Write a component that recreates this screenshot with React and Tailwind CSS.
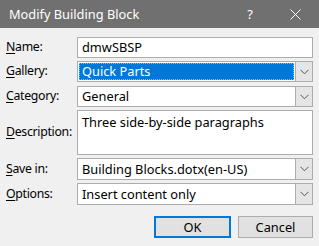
import React from "react";

const font = { fontFamily: '"Noto Sans", sans-serif' };

function Chevron() {
  return (
    <svg width="9" height="6" viewBox="0 0 9 6" className="block">
      <path d="M0.5 0.8 L4.5 4.8 L8.5 0.8" fill="none" stroke="#555" strokeWidth="1" />
    </svg>
  );
}

function Label({ u, rest }) {
  return (
    <span className="w-[71px] shrink-0 whitespace-nowrap text-[12.3px] tracking-[-0.3px] text-black">
      <span className="underline underline-offset-2">{u}</span>
      {rest}
    </span>
  );
}

function Select({ value, selected, tall }) {
  return (
    <div className={`flex flex-1 border border-[#adadad] bg-white ${tall ? "h-[22px]" : "h-[21px]"}`}>
      <div className="flex flex-1 items-center p-[1px]">
        {selected ? (
          <div className="flex h-full w-full items-center border border-dotted border-[#f0a060] bg-[#0078d7] pl-[2px] text-white">
            {value}
          </div>
        ) : (
          <div className="pl-[3px] text-black">{value}</div>
        )}
      </div>
      <div className="flex w-[17px] items-center justify-center border-l border-[#adadad] bg-[#e5e5e5]">
        <Chevron />
      </div>
    </div>
  );
}

export default function App() {
  return (
    <div className="h-[246px] w-[319px] bg-[#f0f0f0] text-[12.8px] leading-none" style={font}>
      <div className="flex h-[28px] items-center bg-[#707070] pl-[9px] text-white">
        <span className="flex-1 text-[12.8px]">Modify Building Block</span>
        <span className="mr-[37px] text-[13px]">?</span>
        <svg width="11" height="11" viewBox="0 0 11 11" className="mr-[18px]">
          <path d="M0.5 0.5 L10.5 10.5 M10.5 0.5 L0.5 10.5" stroke="white" strokeWidth="1" />
        </svg>
      </div>
      <div className="flex flex-col pl-[6px] pr-[6px] pt-[9px]">
        <div className="flex items-center">
          <Label u="N" rest="ame:" />
          <div className="flex h-[21px] flex-1 items-center border border-[#adadad] bg-white pl-[4px] text-black">
            dmwSBSP
          </div>
        </div>
        <div className="mt-[3px] flex items-center">
          <Label u="G" rest="allery:" />
          <Select value="Quick Parts" selected />
        </div>
        <div className="mt-[4px] flex items-center">
          <Label u="C" rest="ategory:" />
          <Select value="General" />
        </div>
        <div className="mt-[3px] flex items-center">
          <Label u="D" rest="escription:" />
          <div className="h-[45px] flex-1 border border-[#adadad] bg-white pl-[4px] pt-[5px] text-black">
            Three side-by-side paragraphs
          </div>
        </div>
        <div className="mt-[3px] flex items-center">
          <Label u="S" rest="ave in:" />
          <Select value="Building Blocks.dotx(en-US)" tall />
        </div>
        <div className="mt-[3px] flex items-center">
          <Label u="O" rest="ptions:" />
          <Select value="Insert content only" tall />
        </div>
        <div className="mt-[11px] flex justify-end gap-[7px]">
          <button className="h-[22px] w-[77px] border-2 border-[#0078d7] bg-[#e1e1e1] text-black">OK</button>
          <button className="h-[22px] w-[75px] border border-[#adadad] bg-[#e1e1e1] text-black">Cancel</button>
        </div>
      </div>
    </div>
  );
}
